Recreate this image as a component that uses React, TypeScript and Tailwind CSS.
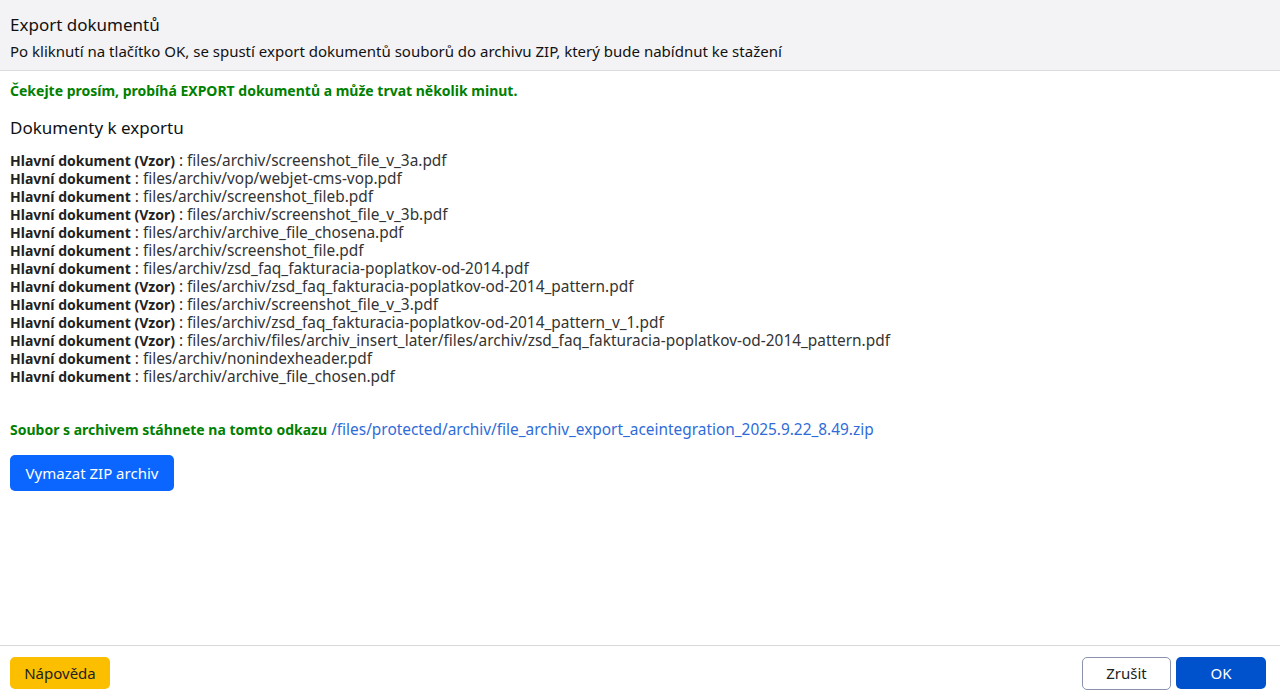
import React from "react";

const docs: [string, string][] = [
  ["Hlavní dokument (Vzor)", "files/archiv/screenshot_file_v_3a.pdf"],
  ["Hlavní dokument", "files/archiv/vop/webjet-cms-vop.pdf"],
  ["Hlavní dokument", "files/archiv/screenshot_fileb.pdf"],
  ["Hlavní dokument (Vzor)", "files/archiv/screenshot_file_v_3b.pdf"],
  ["Hlavní dokument", "files/archiv/archive_file_chosena.pdf"],
  ["Hlavní dokument", "files/archiv/screenshot_file.pdf"],
  ["Hlavní dokument", "files/archiv/zsd_faq_fakturacia-poplatkov-od-2014.pdf"],
  ["Hlavní dokument (Vzor)", "files/archiv/zsd_faq_fakturacia-poplatkov-od-2014_pattern.pdf"],
  ["Hlavní dokument (Vzor)", "files/archiv/screenshot_file_v_3.pdf"],
  ["Hlavní dokument (Vzor)", "files/archiv/zsd_faq_fakturacia-poplatkov-od-2014_pattern_v_1.pdf"],
  ["Hlavní dokument (Vzor)", "files/archiv/files/archiv_insert_later/files/archiv/zsd_faq_fakturacia-poplatkov-od-2014_pattern.pdf"],
  ["Hlavní dokument", "files/archiv/nonindexheader.pdf"],
  ["Hlavní dokument", "files/archiv/archive_file_chosen.pdf"],
];

export default function App() {
  return (
    <div
      className="w-[1280px] h-[700px] flex flex-col bg-white text-[#222]"
      style={{ fontFamily: "'Noto Sans', 'Open Sans', sans-serif" }}
    >
      <div className="h-[71px] bg-[#f3f3f5] border-b border-[#dcdce0] px-[10px] pt-[13px] flex-none">
        <div className="text-[17px] leading-[24px] text-[#111]">Export dokumentů</div>
        <div className="text-[15px] leading-[20px] mt-[4px] text-[#111]">
          Po kliknutí na tlačítko OK, se spustí export dokumentů souborů do archivu ZIP, který bude nabídnut ke stažení
        </div>
      </div>
      <div className="flex-1 px-[10px] pt-[10px]">
        <div className="text-[14px] leading-[20px] font-bold text-[#008000]">
          Čekejte prosím, probíhá EXPORT dokumentů a může trvat několik minut.
        </div>
        <div className="text-[17px] leading-[24px] mt-[15px] text-[#111]">Dokumenty k exportu</div>
        <div className="mt-[12px] text-[15.4px] text-[#333]">
          {docs.map(([a, b], i) => (
            <div key={i} className="h-[18px] leading-[18px] whitespace-nowrap">
              <b className="text-[#222] text-[14px] leading-[18px]">{a}</b> : {b}
            </div>
          ))}
        </div>
        <div className="mt-[34px] h-[20px] leading-[20px] text-[15.4px] whitespace-nowrap">
          <span className="font-bold text-[14px] leading-[20px] text-[#008000]">
            Soubor s archivem stáhnete na tomto odkazu
          </span>{" "}
          <span className="text-[#2f6bd8]">
            /files/protected/archiv/file_archiv_export_aceintegration_2025.9.22_8.49.zip
          </span>
        </div>
        <button className="mt-[15px] h-[36px] w-[164px] rounded-[5px] bg-[#0a66ff] text-white text-[15px]">
          Vymazat ZIP archiv
        </button>
      </div>
      <div className="h-[55px] flex-none border-t border-[#d8d8d8] pl-[10px] pr-[14px] flex items-start pt-[11px] justify-between">
        <button className="h-[32px] w-[100px] rounded-[5px] bg-[#fcbf00] text-[#222] text-[15px]">Nápověda</button>
        <div className="flex gap-[5px]">
          <button className="h-[33px] w-[89px] rounded-[5px] border border-[#8a93ad] bg-white text-[#222] text-[15px]">
            Zrušit
          </button>
          <button className="h-[32px] w-[90px] rounded-[5px] bg-[#0052cc] text-white text-[15px]">OK</button>
        </div>
      </div>
    </div>
  );
}
